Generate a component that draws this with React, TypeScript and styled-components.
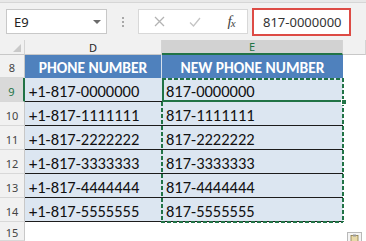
import styled, { createGlobalStyle } from "styled-components";

const GREEN = "#217346";
const dashH = `repeating-linear-gradient(90deg, ${GREEN} 0 4px, transparent 4px 6px)`;
const dashV = `repeating-linear-gradient(180deg, ${GREEN} 0 4px, transparent 4px 6px)`;

const GlobalStyle = createGlobalStyle`
  body {
    margin: 0;
    background: #fff;
    overflow: hidden;
  }
  * { box-sizing: border-box; }
`;

const Window = styled.div`
  width: 366px;
  height: 241px;
  display: flex;
  flex-direction: column;
  overflow: hidden;
  font-family: "Noto Sans", "Liberation Sans", sans-serif;
`;

const RibbonEdge = styled.div`
  height: 4px;
  background: #e8e8e8;
  border-bottom: 1px solid #d6d6d6;
`;

const FormulaBar = styled.div`
  height: 44px;
  background: #f1f1f1;
  display: flex;
  align-items: center;
  padding-left: 6px;
`;

const NameBox = styled.div`
  width: 101px;
  height: 25px;
  background: #fff;
  border: 1px solid #c8c8c8;
  display: flex;
  align-items: center;
  justify-content: space-between;
  padding: 0 5px 0 7px;
  font-size: 13px;
  color: #222;
`;

const DropArrow = styled.span`
  width: 0;
  height: 0;
  border-left: 4px solid transparent;
  border-right: 4px solid transparent;
  border-top: 4px solid #6b6b6b;
`;

const Grip = styled.div`
  width: 2px;
  margin: 0 14px 0 15px;
  display: flex;
  flex-direction: column;
  gap: 2px;
  span {
    width: 2px;
    height: 2px;
    background: #a8a8a8;
  }
`;

const ButtonBox = styled.div`
  width: 110px;
  height: 25px;
  background: #fff;
  border: 1px solid #d8d8d8;
  display: flex;
  align-items: center;
  padding-left: 11px;
`;

const IconButton = styled.span<{ $w: number; $ml?: number }>`
  width: ${(p) => p.$w}px;
  margin-left: ${(p) => p.$ml ?? 0}px;
  display: flex;
  align-items: center;
  justify-content: center;
`;

const Fx = styled.span`
  font-family: "Liberation Serif", serif;
  font-style: italic;
  font-size: 15px;
  color: #444;
  letter-spacing: -1px;
  sub {
    font-size: 11px;
    vertical-align: -1px;
  }
`;

const FormulaInput = styled.div`
  margin-left: 4px;
  width: 99px;
  height: 28px;
  background: #fff;
  border: 2px solid #dd4b45;
  display: flex;
  align-items: center;
  padding-left: 9px;
  font-size: 13px;
  color: #333;
`;

const Sheet = styled.div`
  flex: 1;
  display: grid;
  grid-template-columns: 25px 137px 181px 1fr;
  grid-template-rows: 15px 23px repeat(6, 24px) 1fr;
`;

const Corner = styled.div`
  background: #f1f1f1;
  border-right: 1px solid #d4d4d4;
  border-bottom: 1px solid #c8c8c8;
  display: flex;
  align-items: flex-end;
  justify-content: flex-end;
  padding: 0 3px 2px 0;
`;

const CornerMark = styled.span`
  width: 0;
  height: 0;
  border-left: 8px solid transparent;
  border-bottom: 8px solid #c9c9c9;
`;

const ColHead = styled.div<{ $selected?: boolean }>`
  background: ${(p) => (p.$selected ? "#d2d2d2" : "#f1f1f1")};
  border-right: 1px solid #d4d4d4;
  border-bottom: ${(p) => (p.$selected ? `2px solid ${GREEN}` : "1px solid #c8c8c8")};
  display: flex;
  align-items: center;
  justify-content: center;
  font-size: 11px;
  color: ${(p) => (p.$selected ? GREEN : "#262626")};
`;

const RowHead = styled.div<{ $selected?: boolean }>`
  background: ${(p) => (p.$selected ? "#d9d9d9" : "#f1f1f1")};
  border-right: ${(p) => (p.$selected ? `2px solid ${GREEN}` : "1px solid #c8c8c8")};
  border-bottom: 1px solid #d8d8d8;
  display: flex;
  align-items: center;
  justify-content: center;
  padding-top: 3px;
  font-size: 11px;
  color: ${(p) => (p.$selected ? GREEN : "#444")};
`;

const HeaderCell = styled.div<{ $divider?: boolean }>`
  background: #4f81bd;
  border-right: ${(p) => (p.$divider ? "1px solid #d6e0ec" : "none")};
  display: flex;
  align-items: center;
  justify-content: center;
  padding-top: 2px;
  font-family: "Carlito", "Lato", sans-serif;
  font-weight: 700;
  font-size: 15.5px;
  color: #fff;
`;

const DataCell = styled.div`
  background: #dce6f1;
  border-bottom: 1px solid #1c1c1c;
  display: flex;
  align-items: center;
  padding: 3px 0 0 4px;
  font-family: "Carlito", "Lato", sans-serif;
  font-size: 16.5px;
  color: #111;
`;

const NewCell = styled(DataCell)<{ $first?: boolean; $last?: boolean }>`
  position: relative;
  padding-left: 4px;
  ${(p) =>
    p.$first &&
    `border-left: 2px solid ${GREEN}; border-bottom: 2px solid ${GREEN}; padding-left: 2px;`}
  &::after {
    content: "";
    position: absolute;
    left: ${(p) => (p.$first ? "-2px" : "-1px")};
    right: -1px;
    top: 0;
    bottom: ${(p) => (p.$last ? "-2px" : "-1px")};
    pointer-events: none;
    background: ${dashV} left top / 2px 100% no-repeat,
      ${dashV} right top / 2px 100% no-repeat
        ${(p) => (p.$first ? `, ${dashH} left top / 100% 2px no-repeat` : "")}
        ${(p) => (p.$last ? `, ${dashH} left bottom / 100% 2px no-repeat` : "")};
  }
`;

const FillHandle = styled.span`
  position: absolute;
  right: -4px;
  bottom: -5px;
  width: 6px;
  height: 6px;
  background: ${GREEN};
  border: 1px solid #fff;
  z-index: 3;
`;

const Blank = styled.div`
  background: #fff;
`;

const BlankCorner = styled(Blank)`
  position: relative;
`;

const PasteTag = styled.div`
  position: absolute;
  right: 4px;
  bottom: -3px;
  width: 15px;
  height: 12px;
  background: #f4f4f4;
  border: 1px solid #b9b9b9;
  display: flex;
  align-items: center;
  justify-content: center;
`;

const rows = [
  { n: 9, old: "+1-817-0000000", now: "817-0000000" },
  { n: 10, old: "+1-817-1111111", now: "817-1111111" },
  { n: 11, old: "+1-817-2222222", now: "817-2222222" },
  { n: 12, old: "+1-817-3333333", now: "817-3333333" },
  { n: 13, old: "+1-817-4444444", now: "817-4444444" },
  { n: 14, old: "+1-817-5555555", now: "817-5555555" },
];

function FormulaButtons() {
  return (
    <ButtonBox>
      <IconButton $w={18}>
        <svg width="11" height="11" viewBox="0 0 11 11">
          <path d="M1 1 L10 10 M10 1 L1 10" stroke="#b3b3b3" strokeWidth="1.3" fill="none" />
        </svg>
      </IconButton>
      <IconButton $w={18} $ml={18}>
        <svg width="12" height="10" viewBox="0 0 12 10">
          <path d="M1 5.5 L4.5 9 L11 1" stroke="#c4c4c4" strokeWidth="1.3" fill="none" />
        </svg>
      </IconButton>
      <IconButton $w={20} $ml={17}>
        <Fx>
          f<sub>x</sub>
        </Fx>
      </IconButton>
    </ButtonBox>
  );
}

function Row(props: { n: number; old: string; now: string; first: boolean; last: boolean }) {
  return (
    <>
      <RowHead $selected={props.first}>{props.n}</RowHead>
      <DataCell>{props.old}</DataCell>
      <NewCell $first={props.first} $last={props.last}>
        {props.now}
        {props.first && <FillHandle />}
      </NewCell>
      <Blank />
    </>
  );
}

export default function App() {
  return (
    <Window>
      <GlobalStyle />
      <RibbonEdge />
      <FormulaBar>
        <NameBox>
          E9
          <DropArrow />
        </NameBox>
        <Grip>
          <span />
          <span />
          <span />
        </Grip>
        <FormulaButtons />
        <FormulaInput>817-0000000</FormulaInput>
      </FormulaBar>
      <Sheet>
        <Corner>
          <CornerMark />
        </Corner>
        <ColHead>D</ColHead>
        <ColHead $selected>E</ColHead>
        <ColHead />

        <RowHead>8</RowHead>
        <HeaderCell $divider>PHONE NUMBER</HeaderCell>
        <HeaderCell>NEW PHONE NUMBER</HeaderCell>
        <Blank />

        {rows.map((r, i) => (
          <Row key={r.n} {...r} first={i === 0} last={i === rows.length - 1} />
        ))}

        <RowHead>15</RowHead>
        <Blank />
        <Blank />
        <BlankCorner>
          <PasteTag>
            <svg width="9" height="9" viewBox="0 0 9 9">
              <rect x="1" y="1.5" width="7" height="7" fill="#e8d9a8" stroke="#8a7a4a" strokeWidth="0.8" />
              <rect x="3" y="0.5" width="3" height="2" fill="#9a9a9a" />
            </svg>
          </PasteTag>
        </BlankCorner>
      </Sheet>
    </Window>
  );
}
